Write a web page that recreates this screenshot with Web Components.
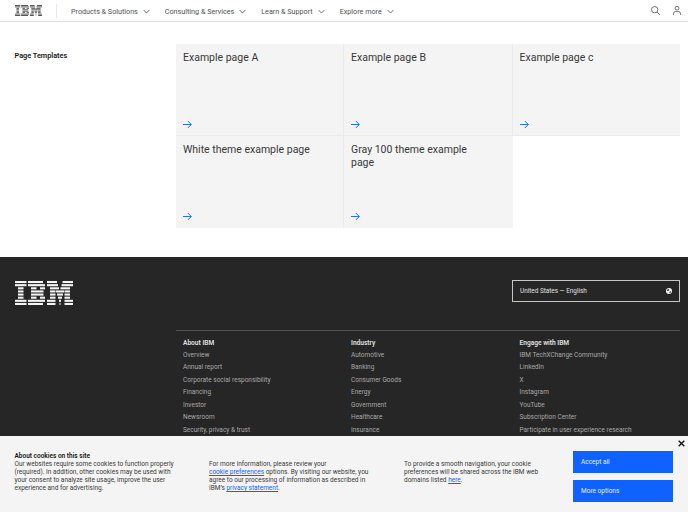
<!DOCTYPE html>
<html lang="en">
<head>
<meta charset="utf-8">
<title>Page Templates</title>
<style>
    html, body { margin: 0; height: 512px; overflow: hidden; background: #fff; }
    body { font-family: Roboto, 'Liberation Sans', sans-serif; color: #161616; }
</style>
</head>
<body>
<site-masthead>
    <nav-item>Products &amp; Solutions</nav-item>
    <nav-item>Consulting &amp; Services</nav-item>
    <nav-item>Learn &amp; Support</nav-item>
    <nav-item>Explore more</nav-item>
</site-masthead>
<page-section heading="Page Templates">
    <page-tile>Example page A</page-tile>
    <page-tile>Example page B</page-tile>
    <page-tile>Example page c</page-tile>
    <page-tile>White theme example page</page-tile>
    <page-tile>Gray 100 theme example page</page-tile>
</page-section>
<site-footer>
    <footer-col heading="About IBM" links="Overview|Annual report|Corporate social responsibility|Financing|Investor|Newsroom|Security, privacy &amp; trust"></footer-col>
    <footer-col heading="Industry" links="Automotive|Banking|Consumer Goods|Energy|Government|Healthcare|Insurance"></footer-col>
    <footer-col heading="Engage with IBM" links="IBM TechXChange Community|LinkedIn|X|Instagram|YouTube|Subscription Center|Participate in user experience research"></footer-col>
</site-footer>
<cookie-banner></cookie-banner>

<script>
// rows of the 8 bar logo, [x, width] in a 58x24 box
const logoRows = [
    [[0,11.5],[13,15],[32,10],[47.5,10.5]],
    [[0,11.5],[13,17],[32,11],[46.5,11.5]],
    [[3,5.5],[16,5.5],[25,5],[35,9],[45.5,9.5]],
    [[3,5.5],[16,12.5],[35,5.5],[41,8],[49.5,5.5]],
    [[3,5.5],[16,12.5],[35,5.5],[42,6],[49.5,5.5]],
    [[3,5.5],[16,5.5],[25,5],[35,5.5],[43,4],[49.5,5.5]],
    [[0,11.5],[13,17],[32,8.5],[44,2],[49.5,8.5]],
    [[0,11.5],[13,15],[32,8.5],[44.5,1],[49.5,8.5]]
];

class IbmLogo extends HTMLElement {
    connectedCallback() {
        const bars = logoRows.map((row, i) =>
            row.map(b => `<rect x="${b[0]}" y="${i * 3}" width="${b[1]}" height="2"/>`).join('')).join('');
        this.attachShadow({mode: 'open'}).innerHTML = `
<style>
    :host { display: block; line-height: 0; }
    svg { width: 100%; height: 100%; display: block; fill: currentColor; }
</style>
<svg viewBox="0 0 58 23" preserveAspectRatio="none">${bars}</svg>`;
    }
}

class NavItem extends HTMLElement {
    constructor() {
        super();
        this.attachShadow({mode: 'open'}).innerHTML = `
<style>
    :host { display: flex; align-items: center; gap: 5px; font-size: 7.2px; color: #525252; white-space: nowrap; }
    svg { width: 7px; height: 7px; fill: none; stroke: #525252; stroke-width: .8; }
</style>
<slot></slot>
<svg viewBox="0 0 7 7"><path d="M.6 2l2.9 3L6.4 2"/></svg>`;
    }
}

class SiteMasthead extends HTMLElement {
    constructor() {
        super();
        this.attachShadow({mode: 'open'}).innerHTML = `
<style>
    :host { display: flex; align-items: center; height: 21px; box-sizing: content-box; border-bottom: 1px solid #e0e0e0; padding: 0 7px 0 15px; }
    ibm-logo { width: 27px; height: 11px; color: #525252; }
    .sep { width: 1px; height: 14px; background: #e8e8e8; margin: 0 14px; }
    nav { display: flex; gap: 15px; align-items: center; flex: 1; padding-top: 1px; }
    .tools { display: flex; gap: 13px; align-items: center; }
    svg { height: 9px; fill: none; stroke: #525252; stroke-width: .8; display: block; }
    .search { width: 9px; }
    .user { width: 8px; }
</style>
<ibm-logo></ibm-logo>
<div class="sep"></div>
<nav><slot></slot></nav>
<div class="tools">
    <svg class="search" viewBox="0 0 9 9"><circle cx="3.7" cy="3.7" r="3.2"/><path d="M6 6L8.8 8.8"/></svg>
    <svg class="user" viewBox="0 0 8 9"><circle cx="4" cy="2.2" r="1.9"/><path d="M.6 9V7.4A1.8 1.8 0 0 1 2.4 5.6H5.6A1.8 1.8 0 0 1 7.4 7.4V9"/></svg>
</div>`;
    }
}

class PageSection extends HTMLElement {
    constructor() {
        super();
        this.attachShadow({mode: 'open'}).innerHTML = `
<style>
    :host { display: grid; grid-template-columns: 176px 504px; padding: 22px 0 29px; }
    h2 { margin: 0; padding: 7px 0 0 14.5px; font-size: 7.3px; line-height: 10px; font-weight: 600; color: #161616; }
    .grid { display: grid; grid-template-columns: 168px 168.5px 167.5px; grid-auto-rows: 92px; }
</style>
<h2></h2>
<div class="grid"><slot></slot></div>`;
        this.shadowRoot.querySelector('h2').textContent = this.getAttribute('heading');
    }
}

class PageTile extends HTMLElement {
    constructor() {
        super();
        this.attachShadow({mode: 'open'}).innerHTML = `
<style>
    :host { display: flex; flex-direction: column; justify-content: space-between; box-sizing: border-box; background: #f4f4f4; border-right: 1px solid #ebebeb; border-bottom: 1px solid #ebebeb; padding: 7px 7px 6px 7px; font-size: 10.5px; line-height: 13px; color: #393939; }
    /* no seam on the outer edges of the grid */
    :host(:nth-child(3)), :host(:nth-child(5)) { border-right-color: #f4f4f4; }
    :host(:nth-child(n+4)) { border-bottom-color: #f4f4f4; }
    .title { padding-right: 26px; }
    svg { width: 9px; height: 9px; fill: none; stroke: #0f62fe; stroke-width: .9; display: block; }
</style>
<div class="title"><slot></slot></div>
<svg viewBox="0 0 9 9"><path d="M0 4.5H8.2M4.8 1L8.3 4.5 4.8 8"/></svg>`;
    }
}

class FooterCol extends HTMLElement {
    constructor() {
        super();
        this.attachShadow({mode: 'open'}).innerHTML = `
<style>
    :host { display: block; font-size: 6.5px; line-height: 12.5px; padding-left: 7px; color: #a8a8a8; white-space: nowrap; }
    h3 { margin: 0; font: inherit; font-size: 6.6px; line-height: 12px; font-weight: 600; color: #e0e0e0; }
    ul { margin: 0; padding: 0; list-style: none; }
</style>
<h3></h3>
<ul></ul>`;
        this.shadowRoot.querySelector('h3').textContent = this.getAttribute('heading');
        const list = this.shadowRoot.querySelector('ul');
        this.getAttribute('links').split('|').forEach(text => {
            const li = document.createElement('li');
            li.textContent = text;
            list.appendChild(li);
        });
    }
}

class SiteFooter extends HTMLElement {
    constructor() {
        super();
        this.attachShadow({mode: 'open'}).innerHTML = `
<style>
    :host { display: block; height: 255px; background: #262626; color: #f4f4f4; padding: 23px 8px 0 14.5px; box-sizing: border-box; }
    .top { display: flex; justify-content: space-between; align-items: flex-start; }
    ibm-logo { width: 58px; height: 24px; margin-top: 1px; color: #f4f4f4; }
    .locale { width: 168px; height: 22px; box-sizing: border-box; border: 1px solid #c6c6c6; display: flex; align-items: center; justify-content: space-between; padding: 0 7px; font-size: 6.4px; color: #e0e0e0; }
    .locale svg { width: 6px; height: 6px; display: block; }
    .cols { margin: 25px 0 0 161.5px; border-top: 1px solid #525252; padding-top: 5.5px; display: grid; grid-template-columns: 168px 168.5px 167.5px; }
</style>
<div class="top">
    <ibm-logo></ibm-logo>
    <div class="locale">United States — English
        <svg viewBox="0 0 6 6"><circle cx="3" cy="3" r="3" fill="#f4f4f4"/><path d="M1.2 1.4L3 .9 3.2 2.2 2 3.2 1 2.6ZM3.6 3.4L5 3.2 4.6 5 3.5 5.2Z" fill="#393939"/></svg>
    </div>
</div>
<div class="cols"><slot></slot></div>`;
    }
}

class CookieBanner extends HTMLElement {
    constructor() {
        super();
        this.attachShadow({mode: 'open'}).innerHTML = `
<style>
    :host { position: fixed; left: 0; right: 0; bottom: 0; height: 76px; box-sizing: border-box; background: #f4f4f4; padding: 15px 15px 0 14.5px; display: grid; grid-template-columns: 194.5px 195px 169px 100px; font-size: 6.5px; line-height: 8.1px; color: #393939; }
    .txt { padding-top: 1px; }
    b { display: block; font-weight: 600; color: #161616; }
    p { margin: 0; }
    .c1 p { width: 165px; }
    .c2 p, .c3 p { margin-top: 8.1px; }
    .line { display: block; white-space: nowrap; }
    a { color: #0f62fe; text-decoration: underline; white-space: nowrap; }
    .actions { display: flex; flex-direction: column; gap: 7px; }
    .btn { height: 22px; background: #0f62fe; color: #e8eefc; padding: 0 8px; display: flex; align-items: center; }
    .close { position: absolute; right: 3px; top: 4px; width: 7px; height: 7px; fill: none; stroke: #161616; stroke-width: 1.4; }
</style>
<div class="txt c1"><b>About cookies on this site</b><p>Our websites require some cookies to function properly (required). In addition, other cookies may be used with your consent to analyze site usage, improve the user experience and for advertising.</p></div>
<div class="txt c2"><p>
    <span class="line">For more information, please review your</span>
    <span class="line"><a>cookie preferences</a> options. By visiting our website, you</span>
    <span class="line">agree to our processing of information as described in</span>
    <span class="line">IBM’s <a>privacy statement</a>.</span>
</p></div>
<div class="txt c3"><p>
    <span class="line">To provide a smooth navigation, your cookie</span>
    <span class="line">preferences will be shared across the IBM web</span>
    <span class="line">domains listed <a>here</a>.</span>
</p></div>
<div class="actions"><div class="btn">Accept all</div><div class="btn">More options</div></div>
<svg class="close" viewBox="0 0 7 7"><path d="M.7.7L6.3 6.3M6.3.7L.7 6.3"/></svg>`;
    }
}

window.customElements.define('ibm-logo', IbmLogo);
window.customElements.define('nav-item', NavItem);
window.customElements.define('site-masthead', SiteMasthead);
window.customElements.define('page-section', PageSection);
window.customElements.define('page-tile', PageTile);
window.customElements.define('footer-col', FooterCol);
window.customElements.define('site-footer', SiteFooter);
window.customElements.define('cookie-banner', CookieBanner);
</script>
</body>
</html>
